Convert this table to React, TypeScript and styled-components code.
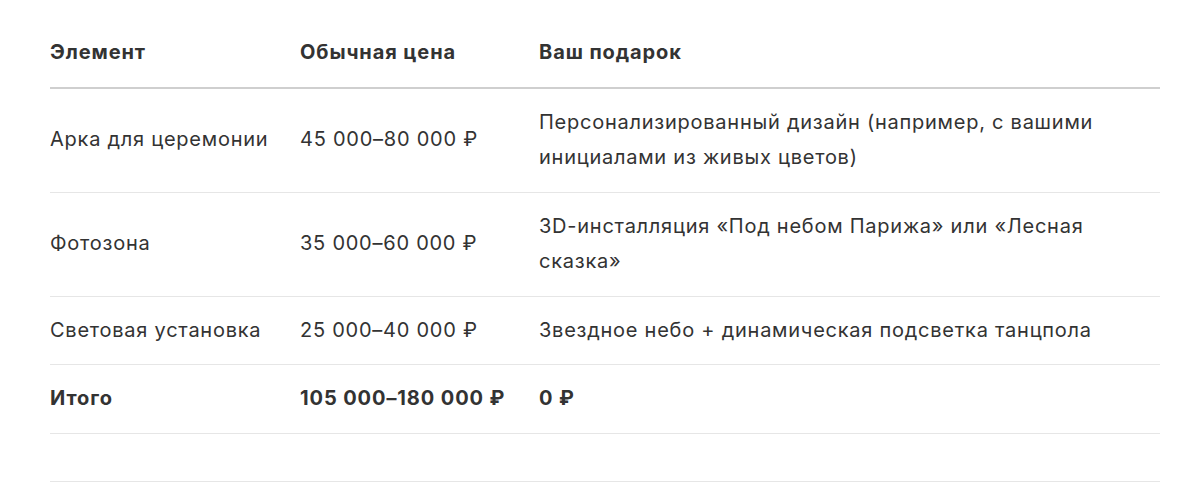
import React from 'react';
import styled, { createGlobalStyle } from 'styled-components';

const GlobalStyle = createGlobalStyle`
    body {
        margin: 0;
        background: #ffffff;
        font-family: Inter, "Noto Sans", sans-serif;
        color: #333333;
    }
`;

const PageContainer = styled.div`
    padding: 19px 40px 0 50px;
`;

const PriceTable = styled.table`
    width: 1110px;
    border-collapse: collapse;
    table-layout: fixed;
    font-size: 20px;
    line-height: 35.5px;
    letter-spacing: 0.75px;
`;

const HeadCell = styled.th<{ $width?: number }>`
    box-sizing: border-box;
    width: ${p => (p.$width ? `${p.$width}px` : 'auto')};
    text-align: left;
    font-weight: 700;
    letter-spacing: 0.9px;
    padding: 16px 24px 16px 0;
    border-bottom: 2px solid #cfcfcf;
    color: #333333;
`;

const Row = styled.tr<{ $total?: boolean }>`
    border-bottom: 1px solid #e6e6e6;
    font-weight: ${p => (p.$total ? 700 : 400)};
    letter-spacing: ${p => (p.$total ? '0.9px' : '0.75px')};
`;

const Cell = styled.td`
    box-sizing: border-box;
    padding: 16px 24px 16px 0;
    vertical-align: middle;
    color: #333333;
`;

const EmptyRow = styled.tr`
    height: 48px;
    border-bottom: 1px solid #e6e6e6;
`;

const rows = [
    { item: 'Арка для церемонии', price: '45 000–80 000 ₽', gift: 'Персонализированный дизайн (например, с вашими инициалами из живых цветов)' },
    { item: 'Фотозона', price: '35 000–60 000 ₽', gift: '3D-инсталляция «Под небом Парижа» или «Лесная сказка»' },
    { item: 'Световая установка', price: '25 000–40 000 ₽', gift: 'Звездное небо + динамическая подсветка танцпола' },
];

export default function App() {
    return (
        <PageContainer>
            <GlobalStyle />
            <PriceTable>
                <thead>
                    <tr>
                        <HeadCell $width={250}>Элемент</HeadCell>
                        <HeadCell $width={239}>Обычная цена</HeadCell>
                        <HeadCell>Ваш подарок</HeadCell>
                    </tr>
                </thead>
                <tbody>
                    {rows.map(r => (
                        <Row key={r.item}>
                            <Cell>{r.item}</Cell>
                            <Cell>{r.price}</Cell>
                            <Cell>{r.gift}</Cell>
                        </Row>
                    ))}
                    <Row $total>
                        <Cell>Итого</Cell>
                        <Cell>105 000–180 000 ₽</Cell>
                        <Cell>0 ₽</Cell>
                    </Row>
                    <EmptyRow>
                        <Cell />
                        <Cell />
                        <Cell />
                    </EmptyRow>
                </tbody>
            </PriceTable>
        </PageContainer>
    );
}
